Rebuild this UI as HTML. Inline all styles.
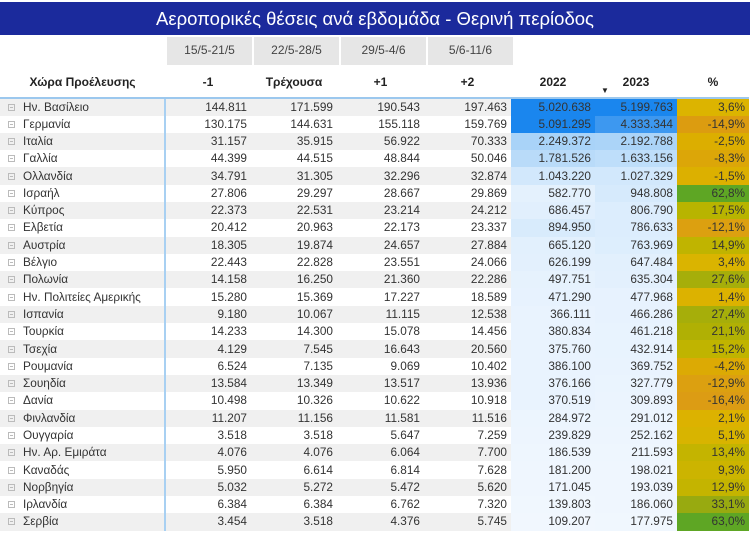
<!DOCTYPE html>
<html><head><meta charset="utf-8"><style>
*{margin:0;padding:0;box-sizing:border-box}
body{width:750px;height:533px;background:#fff;font-family:"Liberation Sans","DejaVu Sans",sans-serif;color:#333;overflow:hidden;position:relative}
.title{position:absolute;left:0;top:2px;width:750px;height:33px;background:#1b2a9c;color:#fff;font-size:18.5px;text-align:center;line-height:33px}
.wk{position:absolute;top:37px;height:28px;background:#e6e6e6;font-size:12px;text-align:center;line-height:26px;color:#444}
table{position:absolute;left:0;top:68px;border-collapse:collapse;table-layout:fixed;width:749px}
th{height:29.5px;font-size:12px;font-weight:bold;text-align:center;color:#222;border-bottom:2px solid #9cc8ee}
td{height:17.3px;font-size:11.8px;text-align:right;padding:0 4px 0 0;white-space:nowrap;overflow:hidden;line-height:17px}
td:first-child{text-align:left;padding-left:8px;border-right:2px solid #a8d0f2}
tr:nth-child(even) td{background:#f0f0f0}
.ic{display:inline-block;width:7px;height:7px;border:1px solid #bbb;margin-right:8px;vertical-align:0px;position:relative}
.ic:after{content:"";position:absolute;left:1px;top:2px;width:3px;height:1px;background:#bbb}
</style></head><body>
<div class="title">Αεροπορικές θέσεις ανά εβδομάδα - Θερινή περίοδος</div>
<div class="wk" style="left:167px;width:85px">15/5-21/5</div>
<div class="wk" style="left:254px;width:85px">22/5-28/5</div>
<div class="wk" style="left:341px;width:85px">29/5-4/6</div>
<div class="wk" style="left:428px;width:85px">5/6-11/6</div>
<table>
<colgroup><col style="width:165px"><col style="width:86px"><col style="width:86px"><col style="width:87px"><col style="width:87px"><col style="width:84px"><col style="width:82px"><col style="width:72px"></colgroup>
<tr><th>Χώρα Προέλευσης</th><th>-1</th><th>Τρέχουσα</th><th>+1</th><th>+2</th><th>2022</th><th style="position:relative">2023<span style="position:absolute;left:6px;top:18px;font-size:8px">▼</span></th><th>%</th></tr>
<tr><td><span class="ic"></span>Ην. Βασίλειο</td><td>144.811</td><td>171.599</td><td>190.543</td><td>197.463</td><td style="background:#1a86ee">5.020.638</td><td style="background:#1a86ee">5.199.763</td><td style="background:#dcb400">3,6%</td></tr>
<tr><td><span class="ic"></span>Γερμανία</td><td>130.175</td><td>144.631</td><td>155.118</td><td>159.769</td><td style="background:#1a86ee">5.091.295</td><td style="background:#3d98f0">4.333.344</td><td style="background:#dc9c10">-14,9%</td></tr>
<tr><td><span class="ic"></span>Ιταλία</td><td>31.157</td><td>35.915</td><td>56.922</td><td>70.333</td><td style="background:#a9d3f8">2.249.372</td><td style="background:#abd4f8">2.192.788</td><td style="background:#dcae00">-2,5%</td></tr>
<tr><td><span class="ic"></span>Γαλλία</td><td>44.399</td><td>44.515</td><td>48.844</td><td>50.046</td><td style="background:#b9dbf9">1.781.526</td><td style="background:#bedefa">1.633.156</td><td style="background:#dca608">-8,3%</td></tr>
<tr><td><span class="ic"></span>Ολλανδία</td><td>34.791</td><td>31.305</td><td>32.296</td><td>32.874</td><td style="background:#d2e8fc">1.043.220</td><td style="background:#d2e8fc">1.027.329</td><td style="background:#dcb000">-1,5%</td></tr>
<tr><td><span class="ic"></span>Ισραήλ</td><td>27.806</td><td>29.297</td><td>28.667</td><td>29.869</td><td style="background:#e4f1fd">582.770</td><td style="background:#d6eafc">948.808</td><td style="background:#5ea624">62,8%</td></tr>
<tr><td><span class="ic"></span>Κύπρος</td><td>22.373</td><td>22.531</td><td>23.214</td><td>24.212</td><td style="background:#e1effd">686.457</td><td style="background:#dcedfd">806.790</td><td style="background:#b8b400">17,5%</td></tr>
<tr><td><span class="ic"></span>Ελβετία</td><td>20.412</td><td>20.963</td><td>22.173</td><td>23.337</td><td style="background:#d8ebfc">894.950</td><td style="background:#dcedfd">786.633</td><td style="background:#dca010">-12,1%</td></tr>
<tr><td><span class="ic"></span>Αυστρία</td><td>18.305</td><td>19.874</td><td>24.657</td><td>27.884</td><td style="background:#e2f0fd">665.120</td><td style="background:#ddeefd">763.969</td><td style="background:#c0b400">14,9%</td></tr>
<tr><td><span class="ic"></span>Βέλγιο</td><td>22.443</td><td>22.828</td><td>23.551</td><td>24.066</td><td style="background:#e3f0fd">626.199</td><td style="background:#e2f0fd">647.484</td><td style="background:#dab400">3,4%</td></tr>
<tr><td><span class="ic"></span>Πολωνία</td><td>14.158</td><td>16.250</td><td>21.360</td><td>22.286</td><td style="background:#e6f2fd">497.751</td><td style="background:#e3f0fd">635.304</td><td style="background:#a6ae0a">27,6%</td></tr>
<tr><td><span class="ic"></span>Ην. Πολιτείες Αμερικής</td><td>15.280</td><td>15.369</td><td>17.227</td><td>18.589</td><td style="background:#e7f2fe">471.290</td><td style="background:#e7f2fe">477.968</td><td style="background:#dcb200">1,4%</td></tr>
<tr><td><span class="ic"></span>Ισπανία</td><td>9.180</td><td>10.067</td><td>11.115</td><td>12.538</td><td style="background:#e9f3fe">366.111</td><td style="background:#e7f2fe">466.286</td><td style="background:#a6ae0a">27,4%</td></tr>
<tr><td><span class="ic"></span>Τουρκία</td><td>14.233</td><td>14.300</td><td>15.078</td><td>14.456</td><td style="background:#e9f3fe">380.834</td><td style="background:#e8f3fe">461.218</td><td style="background:#b0b004">21,1%</td></tr>
<tr><td><span class="ic"></span>Τσεχία</td><td>4.129</td><td>7.545</td><td>16.643</td><td>20.560</td><td style="background:#e9f3fe">375.760</td><td style="background:#e8f3fe">432.914</td><td style="background:#c0b400">15,2%</td></tr>
<tr><td><span class="ic"></span>Ρουμανία</td><td>6.524</td><td>7.135</td><td>9.069</td><td>10.402</td><td style="background:#e9f3fe">386.100</td><td style="background:#e9f3fe">369.752</td><td style="background:#dcaa04">-4,2%</td></tr>
<tr><td><span class="ic"></span>Σουηδία</td><td>13.584</td><td>13.349</td><td>13.517</td><td>13.936</td><td style="background:#e9f3fe">376.166</td><td style="background:#eaf4fe">327.779</td><td style="background:#dca010">-12,9%</td></tr>
<tr><td><span class="ic"></span>Δανία</td><td>10.498</td><td>10.326</td><td>10.622</td><td>10.918</td><td style="background:#e9f3fe">370.519</td><td style="background:#ebf4fe">309.893</td><td style="background:#dc9c14">-16,4%</td></tr>
<tr><td><span class="ic"></span>Φινλανδία</td><td>11.207</td><td>11.156</td><td>11.581</td><td>11.516</td><td style="background:#ecf5fe">284.972</td><td style="background:#ecf5fe">291.012</td><td style="background:#dcb200">2,1%</td></tr>
<tr><td><span class="ic"></span>Ουγγαρία</td><td>3.518</td><td>3.518</td><td>5.647</td><td>7.259</td><td style="background:#edf5fe">239.829</td><td style="background:#edf5fe">252.162</td><td style="background:#d8b400">5,1%</td></tr>
<tr><td><span class="ic"></span>Ην. Αρ. Εμιράτα</td><td>4.076</td><td>4.076</td><td>6.064</td><td>7.700</td><td style="background:#eef6fe">186.539</td><td style="background:#eef6fe">211.593</td><td style="background:#c4b400">13,4%</td></tr>
<tr><td><span class="ic"></span>Καναδάς</td><td>5.950</td><td>6.614</td><td>6.814</td><td>7.628</td><td style="background:#eff6fe">181.200</td><td style="background:#eff6fe">198.021</td><td style="background:#ccb400">9,3%</td></tr>
<tr><td><span class="ic"></span>Νορβηγία</td><td>5.032</td><td>5.272</td><td>5.472</td><td>5.620</td><td style="background:#eff6fe">171.045</td><td style="background:#eff6fe">193.039</td><td style="background:#c4b400">12,9%</td></tr>
<tr><td><span class="ic"></span>Ιρλανδία</td><td>6.384</td><td>6.384</td><td>6.762</td><td>7.320</td><td style="background:#f0f7fe">139.803</td><td style="background:#eff6fe">186.060</td><td style="background:#98aa10">33,1%</td></tr>
<tr><td><span class="ic"></span>Σερβία</td><td>3.454</td><td>3.518</td><td>4.376</td><td>5.745</td><td style="background:#f1f7fe">109.207</td><td style="background:#f0f7fe">177.975</td><td style="background:#5ea624">63,0%</td></tr>
</table>
</body></html>
